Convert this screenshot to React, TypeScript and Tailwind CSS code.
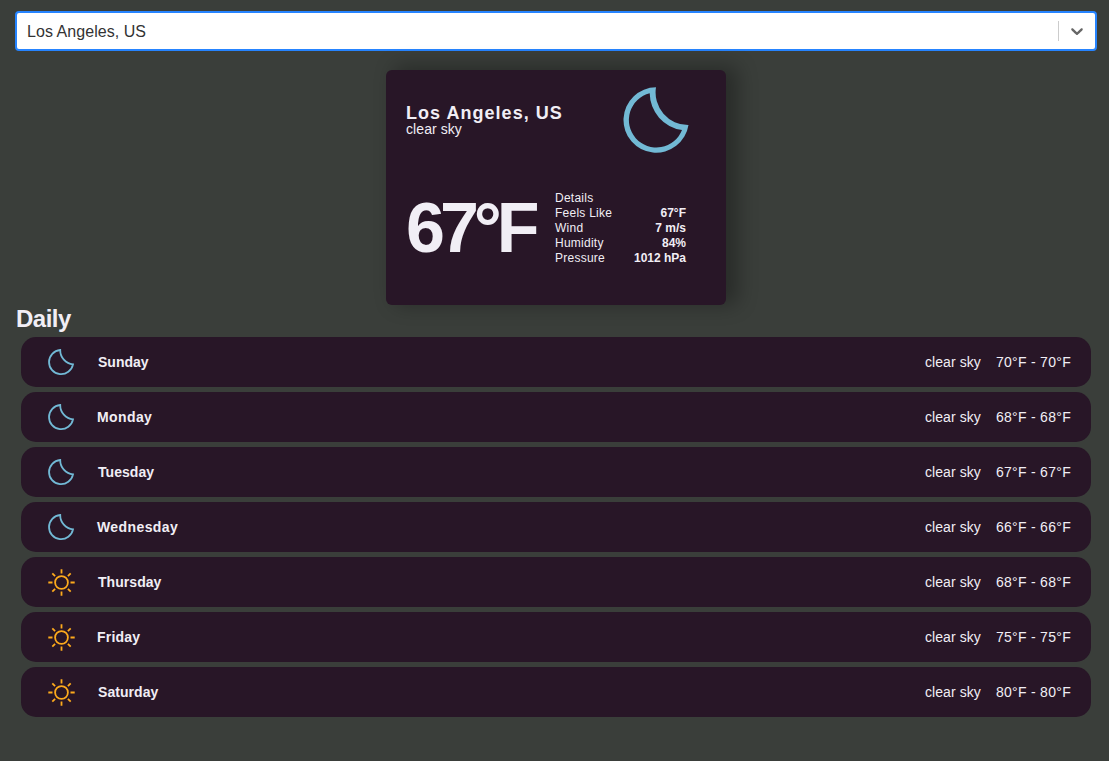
const days = [
  { name: "Sunday", icon: "moon", low: 70, high: 70, tracking: "pl-[22px] tracking-[0px]" },
  { name: "Monday", icon: "moon", low: 68, high: 68, tracking: "pl-[21px] tracking-[0.4px]" },
  { name: "Tuesday", icon: "moon", low: 67, high: 67, tracking: "pl-[22px] tracking-[0.05px]" },
  { name: "Wednesday", icon: "moon", low: 66, high: 66, tracking: "pl-[21px] tracking-[0.4px]" },
  { name: "Thursday", icon: "sun", low: 68, high: 68, tracking: "pl-[22px] tracking-[0.05px]" },
  { name: "Friday", icon: "sun", low: 75, high: 75, tracking: "pl-[21px] tracking-[0.2px]" },
  { name: "Saturday", icon: "sun", low: 80, high: 80, tracking: "pl-[22px] tracking-[0.05px]" },
];

const details = [
  { label: "Feels Like", value: "67°F" },
  { label: "Wind", value: "7 m/s" },
  { label: "Humidity", value: "84%" },
  { label: "Pressure", value: "1012 hPa" },
];

function BigMoon() {
  return (
    <svg width="80" height="80" viewBox="0 0 80 80" fill="#72b9d5" fillRule="evenodd">
      <path d="M40 7.3A32.7 32.7 0 1 0 72.5 45A32.5 32.5 0 0 1 40 7.3ZM33.7 13.3A37.5 37.5 0 0 0 66 50A27.5 27.5 0 1 1 33.7 13.3Z" />
    </svg>
  );
}

function SmallMoon() {
  return (
    <svg width="30" height="30" viewBox="0 0 30 30" fill="none" stroke="#72b9d5" strokeWidth="1.8">
      <path d="M14.2 3A12.1 12.1 0 1 0 27 17.4A14.4 14.4 0 0 1 14.2 3Z" />
    </svg>
  );
}

function Sun() {
  return (
    <svg width="30" height="30" viewBox="0 0 30 30" fill="none" stroke="#fdaa1c" strokeWidth="1.8">
      <circle cx="15.5" cy="15.5" r="6.4" />
      <path d="M15.5 2.3v4.2M15.5 24.5v4.2M2.3 15.5h4.2M24.5 15.5h4.2M6.3 6.3l2.8 2.8M21.9 21.9l2.8 2.8M6.3 24.7l2.8-2.8M21.9 9.1l2.8-2.8" />
    </svg>
  );
}

export default function App() {
  return (
    <div className="h-[761px] overflow-hidden bg-[#3a3e3a] pt-[11px] pr-3 pl-[15px] font-['Liberation_Sans',Arial,sans-serif] text-[#f1eef5]">
      <div className="flex h-10 items-center rounded-[4px] border-2 border-[#2684ff] bg-white">
        <span className="flex-1 pt-px pl-[10px] text-base tracking-[0.05px] text-[#333333]">Los Angeles, US</span>
        <span className="h-5 w-px bg-[#cccccc]" />
        <span className="flex w-9 justify-center text-[#666666]">
          <svg width="20" height="20" viewBox="0 0 20 20" fill="currentColor">
            <path d="M4.516 7.548c0.436-0.446 1.043-0.481 1.576 0l3.908 3.747 3.908-3.747c0.533-0.481 1.141-0.446 1.574 0 0.436 0.445 0.408 1.197 0 1.615-0.406 0.418-4.695 4.502-4.695 4.502-0.217 0.223-0.502 0.335-0.787 0.335s-0.57-0.112-0.789-0.335c0 0-4.287-4.084-4.695-4.502s-0.436-1.17 0-1.615z" />
          </svg>
        </span>
      </div>

      <section className="mx-auto mt-[19px] h-[235px] w-[340px] rounded-[6px] bg-[#281627] shadow-[10px_-2px_20px_2px_rgba(0,0,0,0.3)]">
        <div className="flex justify-between pt-[10px] pr-[30px] pl-5">
          <div className="pt-[23px]">
            <p className="text-lg leading-5 font-bold tracking-[1.03px]">Los Angeles, US</p>
            <p className="-mt-px text-sm leading-[14px] tracking-[0.08px]">clear sky</p>
          </div>
          <BigMoon />
        </div>
        <div className="flex pt-[31px] pl-5">
          <p className="w-[149px] pt-[2px] text-[70px] leading-[70px] font-bold tracking-[-5px]">67°F</p>
          <div className="w-[131px] text-xs leading-[15px]">
            <p className="tracking-[0.25px]">Details</p>
            {details.map((d) => (
              <div key={d.label} className="flex justify-between">
                <span className="tracking-[0.25px]">{d.label}</span>
                <span className="font-bold">{d.value}</span>
              </div>
            ))}
          </div>
        </div>
      </section>

      <h2 className="pl-px text-2xl leading-7 font-bold tracking-[-0.5px]">Daily</h2>
      <div className="mt-1 mr-[6px] ml-[6px] flex flex-col gap-[5px]">
        {days.map((d) => (
          <div key={d.name} className="flex h-[50px] items-center rounded-[15px] bg-[#281627] pr-5 pl-[25px] text-sm">
            {d.icon === "moon" ? <SmallMoon /> : <Sun />}
            <span className={`flex-1 font-bold ${d.tracking}`}>{d.name}</span>
            <span className="pr-[15px] tracking-[0.08px]">clear sky</span>
            <span className="tracking-[0.29px]">{d.low}°F - {d.high}°F</span>
          </div>
        ))}
      </div>
    </div>
  );
}
